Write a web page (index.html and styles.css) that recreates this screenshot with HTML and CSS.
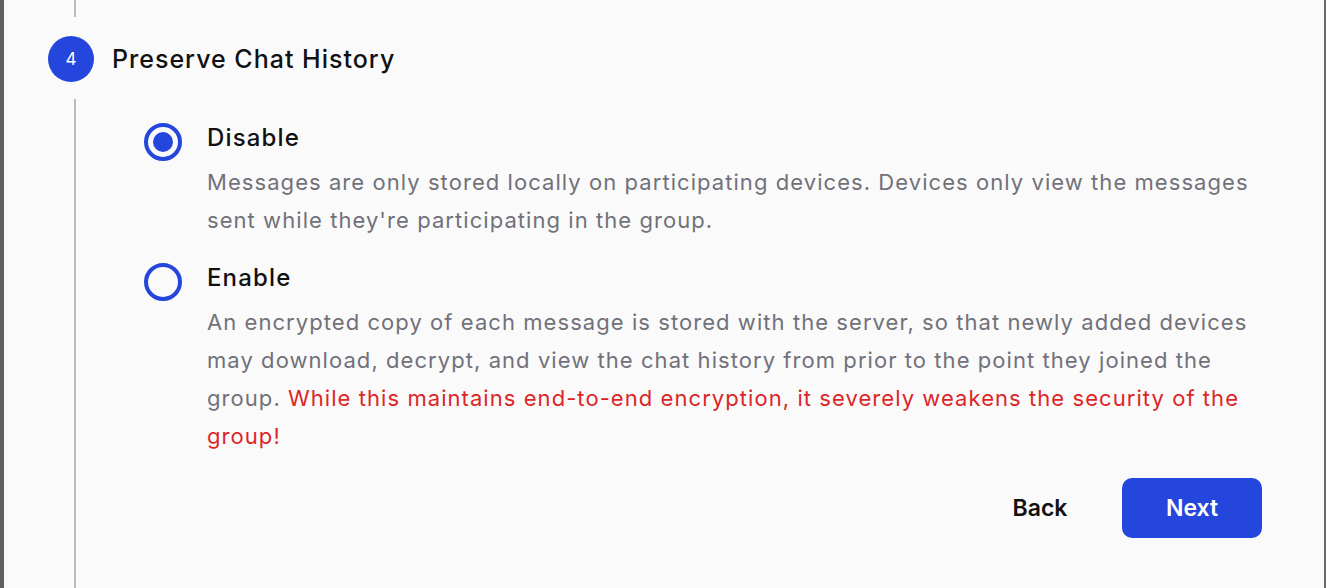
FILE: index.html
```html
<!DOCTYPE html>
<html lang="en">
<head>
<meta charset="utf-8">
<title>Preserve Chat History</title>
<link rel="stylesheet" href="styles.css">
</head>
<body>
<div class="frame">
  <div class="stepper">
    <div class="rail-top"><span class="line"></span></div>
    <div class="step-head">
      <div class="step-num">4</div>
      <h2 class="step-title">Preserve Chat History</h2>
    </div>
    <div class="step-body">
      <div class="rail"><span class="line"></span></div>
      <div class="content">
        <div class="options">
          <div class="option">
            <span class="radio checked"><span class="dot"></span></span>
            <div class="option-text">
              <div class="option-label">Disable</div>
              <p class="option-desc">Messages are only stored locally on participating devices. Devices only view the messages sent while they're participating in the group.</p>
            </div>
          </div>
          <div class="option">
            <span class="radio"></span>
            <div class="option-text">
              <div class="option-label">Enable</div>
              <p class="option-desc">An encrypted copy of each message is stored with the server, so that newly added devices may download, decrypt, and view the chat history from prior to the point they joined the group. <span class="warn">While this maintains end-to-end encryption, it severely weakens the security of the group!</span></p>
            </div>
          </div>
        </div>
        <div class="actions">
          <button class="btn btn-ghost">Back</button>
          <button class="btn btn-primary">Next</button>
        </div>
      </div>
    </div>
  </div>
</div>
</body>
</html>
```
FILE: styles.css
```css
* { box-sizing: border-box; }
html, body { margin: 0; padding: 0; }
body {
  font-family: Inter, "Noto Sans", sans-serif;
  background: #fafafa;
  color: #111;
}
.frame {
  height: 588px;
  border-left: 4px solid #5f5f5f;
  border-right: 2px solid #6a6a6a;
  background: #fafafa;
  overflow: hidden;
}
.stepper {
  padding-left: 44px;
  display: flex;
  flex-direction: column;
  height: 100%;
}
.rail-top {
  width: 46px;
  height: 17px;
  margin-bottom: 19px;
}
.line {
  display: block;
  width: 2px;
  height: 100%;
  margin-left: 26px;
  background: #bcbcbc;
}
.step-head {
  display: flex;
  align-items: center;
  gap: 18px;
  height: 46px;
}
.step-num {
  width: 46px;
  height: 46px;
  border-radius: 50%;
  background: #2446dc;
  color: #fff;
  display: flex;
  align-items: center;
  justify-content: center;
  font-size: 17px;
  font-weight: 400;
}
.step-title {
  margin: 0;
  font-size: 25px;
  font-weight: 500;
  color: #111;
  letter-spacing: 1px;
}
.step-body {
  display: flex;
  flex: 1;
  margin-top: 17px;
}
.rail {
  width: 46px;
  flex: none;
}
.content {
  flex: none;
  width: 1168px;
  padding-left: 50px;
  padding-top: 24px;
}
.options {
  display: flex;
  flex-direction: column;
  gap: 24px;
}
.option {
  display: flex;
  align-items: flex-start;
  gap: 25px;
}
.radio {
  flex: none;
  width: 38px;
  height: 38px;
  border-radius: 50%;
  border: 4px solid #2446dc;
  display: flex;
  align-items: center;
  justify-content: center;
  background: #fafafa;
}
.dot {
  width: 20px;
  height: 20px;
  border-radius: 50%;
  background: #2446dc;
}
.option-text { flex: 1; }
.option-label {
  font-size: 24px;
  line-height: 30px;
  font-weight: 500;
  color: #111;
  letter-spacing: 1.15px;
}
.option-desc {
  margin: 11px 0 0;
  font-size: 22px;
  line-height: 37.7px;
  color: #71717a;
  letter-spacing: 1.06px;
}
.warn { color: #dc2626; }
.actions {
  display: flex;
  justify-content: flex-end;
  gap: 12px;
  margin-top: 23px;
}
.btn {
  width: 140px;
  height: 60px;
  border: none;
  border-radius: 10px;
  font-family: Inter, "Noto Sans", sans-serif;
  font-size: 23px;
  font-weight: 600;
  cursor: pointer;
}
.btn-ghost { background: transparent; color: #111; }
.btn-primary { background: #2446dc; color: #fff; }
```
